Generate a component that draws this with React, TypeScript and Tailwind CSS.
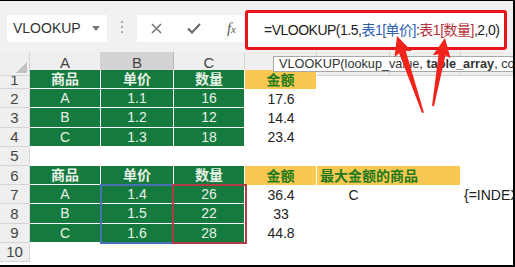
import React from "react";

const COLS = "grid grid-cols-[30px_71px_73px_71px_72px_73px_71px_1fr]";

type Kind = "green" | "yellow" | "plain" | "empty";

function Cell({ kind = "empty", bold, span, left, children }: { kind?: Kind; bold?: boolean; span?: boolean; left?: boolean; children?: React.ReactNode }) {
  const base = "flex items-center whitespace-nowrap overflow-visible " + (left ? "justify-start pl-[3px] " : "justify-center ");
  const byKind: Record<Kind, string> = {
    green: "bg-[#157a3e] text-[#e8f2e8] border-r border-b border-white",
    yellow: "bg-[#f9c852] text-[#1c7a1c] border-r border-white",
    plain: "text-[#222]",
    empty: "",
  };
  return (
    <div className={base + byKind[kind] + (bold ? " font-bold" : "") + (span ? " col-span-2" : "")}>
      {children}
    </div>
  );
}

function Row({ n, children }: { n: number; children?: React.ReactNode }) {
  return (
    <div className={COLS + " h-[19.2px] text-[14px] leading-none"}>
      <div className="flex items-center justify-center bg-[#efefef] border-r border-b border-[#d4d4d4] text-[15px] text-[#444]">
        {n}
      </div>
      {children}
    </div>
  );
}

export default function App() {
  return (
    <div className="relative w-[515px] h-[267px] overflow-hidden bg-white border-t border-r-2 border-b-2 border-black font-['Liberation_Sans','Noto_Sans_CJK_SC',sans-serif]">
      {/* Formula bar */}
      <div className="flex items-start h-[51px] bg-[#f1f1f1]">
        <div className="ml-[7px] mt-[14px] w-[100px] h-[27px] bg-white flex items-center justify-between pl-[6px] pr-[7px]">
          <span className="text-[14px] text-[#333]">VLOOKUP</span>
          <svg width="8" height="5" viewBox="0 0 8 5"><path d="M0 0h8L4 5z" fill="#777" /></svg>
        </div>
        <div className="ml-[14px] mt-[20px] flex flex-col gap-[3px]">
          <span className="w-[2px] h-[2px] bg-[#aaa]" />
          <span className="w-[2px] h-[2px] bg-[#aaa]" />
          <span className="w-[2px] h-[2px] bg-[#aaa]" />
        </div>
        <div className="ml-[14px] mt-[14px] w-[107px] h-[27px] bg-white flex items-center justify-between pl-[14px] pr-[8px]">
          <svg width="11" height="11" viewBox="0 0 11 11"><path d="M1 1l9 9M10 1l-9 9" stroke="#777" strokeWidth="1.6" /></svg>
          <svg width="14" height="11" viewBox="0 0 14 11"><path d="M1 5.5l4 4L13 1" stroke="#666" strokeWidth="2" fill="none" /></svg>
          <span className="font-['Liberation_Serif',serif] italic text-[15px] text-[#555]">
            f<span className="text-[11px]">x</span>
          </span>
        </div>
        <div className="ml-[1px] mt-[9px] w-[262px] h-[40px] bg-white border-[3px] border-[#e8141b] rounded-[3px] flex items-center pl-[16px] text-[14px] tracking-[-0.5px] text-[#222] whitespace-nowrap">
          =VLOOKUP(1.5,<span className="text-[#2d5fb5]">表1[单价]</span>:<span className="text-[#b8323c]">表1[数量]</span>,2,0)
        </div>
      </div>

      {/* Column headers */}
      <div className={COLS + " h-[18px] text-[15px] text-[#444]"}>
        <div className="relative bg-[#efefef] border-r border-b border-[#d4d4d4]">
          <svg className="absolute right-[2px] bottom-[2px]" width="11" height="11" viewBox="0 0 11 11"><path d="M11 0v11H0z" fill="#c2c2c2" /></svg>
        </div>
        <div className="flex items-center justify-center bg-[#efefef] border-r border-b border-[#d4d4d4]">A</div>
        <div className="flex items-center justify-center bg-[#d3d3d3] border-r border-b border-[#b8b8b8]">B</div>
        <div className="flex items-center justify-center bg-[#efefef] border-r border-b border-[#d4d4d4]">C</div>
        <div className="bg-[#efefef] border-r border-b border-[#d4d4d4]" />
        <div className="bg-[#efefef] border-r border-b border-[#d4d4d4]" />
        <div className="bg-[#efefef] border-r border-b border-[#d4d4d4]" />
        <div className="bg-[#efefef] border-b border-[#d4d4d4]" />
      </div>

      {/* Sheet rows */}
      <Row n={1}>
        <Cell kind="green" bold>商品</Cell>
        <Cell kind="green" bold>单价</Cell>
        <Cell kind="green" bold>数量</Cell>
        <Cell kind="yellow" bold>金额</Cell>
      </Row>
      <Row n={2}>
        <Cell kind="green">A</Cell>
        <Cell kind="green">1.1</Cell>
        <Cell kind="green">16</Cell>
        <Cell kind="plain">17.6</Cell>
      </Row>
      <Row n={3}>
        <Cell kind="green">B</Cell>
        <Cell kind="green">1.2</Cell>
        <Cell kind="green">12</Cell>
        <Cell kind="plain">14.4</Cell>
      </Row>
      <Row n={4}>
        <Cell kind="green">C</Cell>
        <Cell kind="green">1.3</Cell>
        <Cell kind="green">18</Cell>
        <Cell kind="plain">23.4</Cell>
      </Row>
      <Row n={5} />
      <Row n={6}>
        <Cell kind="green" bold>商品</Cell>
        <Cell kind="green" bold>单价</Cell>
        <Cell kind="green" bold>数量</Cell>
        <Cell kind="yellow" bold>金额</Cell>
        <Cell kind="yellow" bold span left>最大金额的商品</Cell>
      </Row>
      <Row n={7}>
        <Cell kind="green">A</Cell>
        <Cell kind="green">1.4</Cell>
        <Cell kind="green">26</Cell>
        <Cell kind="plain">36.4</Cell>
        <Cell kind="plain">C</Cell>
        <Cell />
        <Cell kind="plain" left>{"{=INDEX"}</Cell>
      </Row>
      <Row n={8}>
        <Cell kind="green">B</Cell>
        <Cell kind="green">1.5</Cell>
        <Cell kind="green">22</Cell>
        <Cell kind="plain">33</Cell>
      </Row>
      <Row n={9}>
        <Cell kind="green">C</Cell>
        <Cell kind="green">1.6</Cell>
        <Cell kind="green">28</Cell>
        <Cell kind="plain">44.8</Cell>
      </Row>
      <Row n={10} />

      {/* Range highlights */}
      <div className="absolute left-[100px] top-[183px] w-[74px] h-[60px] border-2 border-[#4671b6]" />
      <div className="absolute left-[172px] top-[183px] w-[75px] h-[60px] border-2 border-[#b23a45]" />

      {/* Function tooltip */}
      <div className="absolute left-[273px] top-[55px] h-[16px] pl-[5px] pr-[20px] bg-white border border-[#a8a8a8] text-[12.7px] leading-[14px] text-[#333] whitespace-nowrap">
        VLOOKUP(lookup_value, <b>table_array</b>, col_index_num, [range_lookup])
      </div>

      {/* Annotation arrows */}
      <svg className="absolute left-0 top-0 pointer-events-none" width="515" height="267">
        <g transform="translate(397 35) rotate(-18.7)" fill="#f2231a">
          <path d="M0 0L9 19L3.5 17L1 81L-1 81L-3.5 17L-9 19Z" />
        </g>
        <g transform="translate(445 37) rotate(10)" fill="#f2231a">
          <path d="M0 0L9 19L3.5 17L1 69L-1 69L-3.5 17L-9 19Z" />
        </g>
      </svg>
    </div>
  );
}
